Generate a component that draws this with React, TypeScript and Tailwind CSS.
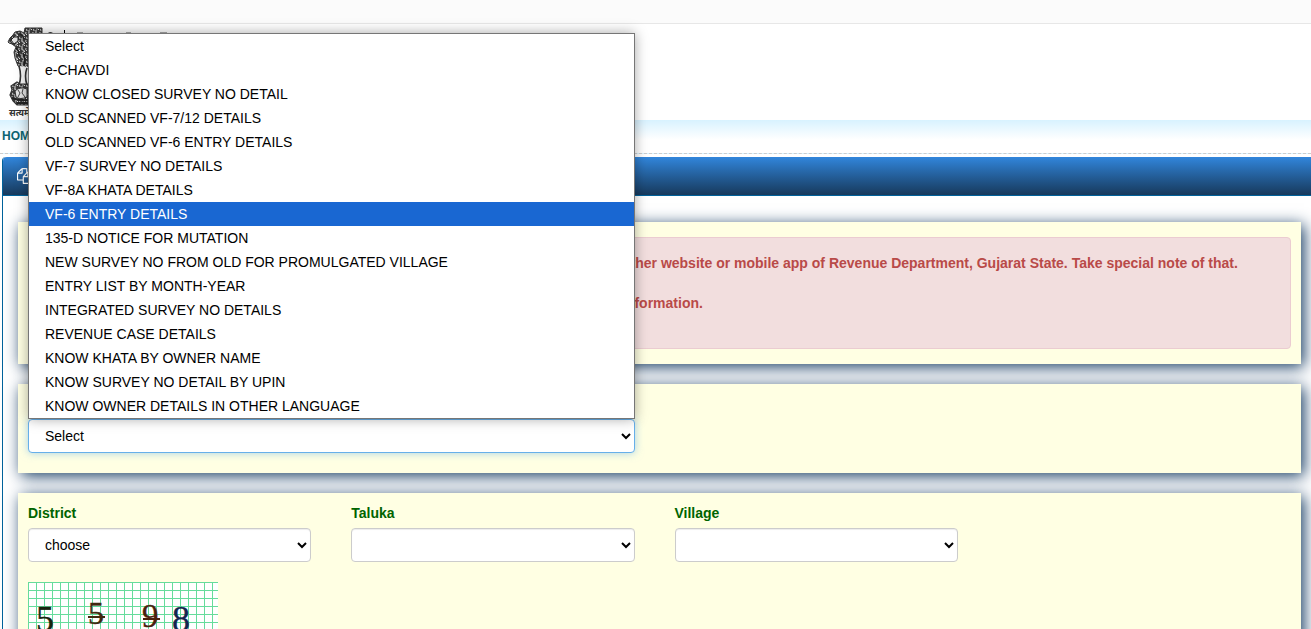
import type { ReactNode } from "react";

const services = [
  "Select",
  "e-CHAVDI",
  "KNOW CLOSED SURVEY NO DETAIL",
  "OLD SCANNED VF-7/12 DETAILS",
  "OLD SCANNED VF-6 ENTRY DETAILS",
  "VF-7 SURVEY NO DETAILS",
  "VF-8A KHATA DETAILS",
  "VF-6 ENTRY DETAILS",
  "135-D NOTICE FOR MUTATION",
  "NEW SURVEY NO FROM OLD FOR PROMULGATED VILLAGE",
  "ENTRY LIST BY MONTH-YEAR",
  "INTEGRATED SURVEY NO DETAILS",
  "REVENUE CASE DETAILS",
  "KNOW KHATA BY OWNER NAME",
  "KNOW SURVEY NO DETAIL BY UPIN",
  "KNOW OWNER DETAILS IN OTHER LANGUAGE",
];

const highlighted = "VF-6 ENTRY DETAILS";

const selectClass =
  "block h-[34px] w-full rounded border bg-white px-3 py-1 text-sm text-black outline-none";

function Emblem() {
  return (
    <svg viewBox="0 0 180 96" className="block h-24 w-[180px]" aria-hidden="true">
      <defs>
        <pattern id="curls" width="7" height="8" patternUnits="userSpaceOnUse">
          <rect width="7" height="8" fill="#3a3a3a" />
          <path
            d="M0 1q2-1 2 1t2 1M5 0q-1 2 1 3M1 5q2-1 3 1M5 5q1 0 1 2M0 7l2 0M3 3l1 1"
            fill="none"
            stroke="#e0e0e0"
            strokeWidth="1"
          />
        </pattern>
      </defs>
      {/* mane and body */}
      <path
        d="M8 18l2-4 3-3 2-3 5-1 4 2 1-5h17v9H31v32l-5 1-3-2-5-2-3-8-1-6 2-5-4-3-3-1z"
        fill="url(#curls)"
        stroke="#333"
        strokeWidth="1"
      />
      <path d="M11 16l3-3 4 0 0 4-4 3z" fill="#e2e2e2" stroke="#222" strokeWidth="1" />
      <path d="M18 10q5 0 6 5M16 24q4 4 3 9M23 29q3 7 1 13" fill="none" stroke="#222" strokeWidth="1.4" />
      {/* legs */}
      <path d="M19 42l2 9-2 10h10V43z" fill="#f7f7f7" />
      <path d="M19 42q3 10 0 19M27 44q-3 8 0 17" fill="none" stroke="#333" strokeWidth="1.6" />
      {/* abacus and bell */}
      <path
        d="M17 58l3 2h20v21H17l-4-4-3-6 2-5-1-4z"
        fill="url(#curls)"
        stroke="#333"
        strokeWidth="1.2"
      />
      <path d="M15 67q5-5 12-2v8q-7 3-11 0z" fill="#e2e2e2" stroke="#333" strokeWidth="1" />
      <path d="M18 66l2 3-2 4M23 65l-1 4 3 4" fill="none" stroke="#444" strokeWidth="1" />
      <path d="M12 74q8 3 20 2M17 79h20" fill="none" stroke="#222" strokeWidth="2" />
      <text x="9" y="92" fontSize="9" fontWeight="700" fill="#333" fontFamily="Noto Sans, sans-serif">
        सत्यमेव
      </text>
      <path d="M48 9q2-2 5 0z" fill="#333" />
      <path d="M64.500 6v8" stroke="#000" strokeWidth="1" />
      <path d="M77 9h6M126 9h5M160 9h7" stroke="#aaa" strokeWidth="2" />
    </svg>
  );
}

function FilesIcon() {
  return (
    <svg viewBox="0 0 1792 1792" className="size-4 fill-white" aria-hidden="true">
      <path d="M1696 384q40 0 68 28t28 68v1216q0 40-28 68t-68 28h-960q-40 0-68-28t-28-68v-288h-544q-40 0-68-28t-28-68v-672q0-40 20-88t48-76l408-408q28-28 76-48t88-20h416q40 0 68 28t28 68v328q68-40 128-40h416zm-544 213l-299 299h299v-299zm-640-384l-299 299h299v-299zm196 647l316-316v-416h-384v416q0 40-28 68t-68 28h-416v640h512v-256q0-40 20-88t48-76zm956 804v-1152h-384v416q0 40-28 68t-68 28h-416v640h896z" />
    </svg>
  );
}

function Captcha() {
  return (
    <svg viewBox="0 0 190 60" className="block h-[60px] w-[190px]" role="img" aria-label="Captcha">
      <defs>
        <pattern id="grid" width="8" height="8" patternUnits="userSpaceOnUse">
          <rect width="8" height="8" fill="#fff" />
          <path d="M0 .5h8M.5 0v8" stroke="#66dc9c" />
        </pattern>
      </defs>
      <rect width="190" height="60" fill="url(#grid)" />
      <g fontFamily="Liberation Serif, serif" fontSize="34" strokeWidth="0.4">
        <text x="8" y="49" fill="#17250f" stroke="#17250f" fontSize="36">5</text>
        <text x="60" y="42" fill="#40290f" stroke="#40290f" fontSize="32">5</text>
        <text x="114" y="45" fill="#4a200c" stroke="#4a200c" fontSize="33">9</text>
        <text x="144" y="49" fill="#14244f" stroke="#14244f" fontSize="36">8</text>
      </g>
      <path d="M60 35h17" stroke="#40290f" strokeWidth="2" />
      <path d="M115 37h17" stroke="#4a200c" strokeWidth="2" />
    </svg>
  );
}

function Card({ children, className = "" }: { children: ReactNode; className?: string }) {
  return (
    <section className={`bg-[#ffffe3] px-2.5 shadow-[3px_3px_15px_#163c63] ${className}`}>
      {children}
    </section>
  );
}

function Field({ id, label, options }: { id: string; label: string; options: string[] }) {
  return (
    <div>
      <label htmlFor={id} className="mb-[5px] block text-sm font-bold text-[#006400]">
        {label}
      </label>
      <select id={id} className={`${selectClass} border-[#ccc] shadow-[inset_0_1px_1px_#00000013]`}>
        {options.map((o) => (
          <option key={o}>{o}</option>
        ))}
      </select>
    </div>
  );
}

export default function App() {
  return (
    <div className="h-screen overflow-hidden bg-white font-['Liberation_Sans',sans-serif] text-sm">
      <div className="h-6 border-b border-[#e7e7e7] bg-[#fbfbfb]" />
      <header className="h-24">
        <Emblem />
      </header>

      <nav className="h-[34px] border-b border-dashed border-[#ccc] bg-linear-to-b from-[#d8f2ff] to-white to-60% px-0.5 py-[5px]">
        <a href="#home" className="text-xs font-bold text-[#0b6472]">
          HOME
        </a>
      </nav>

      <main className="mt-[3px] ml-0.5 rounded-tl border-l border-[#00629b]">
        <div className="flex h-[39px] items-center rounded-tl border-b border-[#00629b] bg-linear-to-b from-[#3186dc] to-[#173a5d] px-3.5">
          <FilesIcon />
        </div>

        <div className="flex flex-col gap-5 pt-[26px] pr-2.5 pl-[15px]">
          <Card className="py-[15px]">
            <div className="rounded border border-[#ebccd1] bg-[#f2dede] py-[15px] pl-[593px] font-bold text-[#b94a48]">
              <p className="mb-5">
                other website or mobile app of Revenue Department, Gujarat State. Take special note of
                that.
              </p>
              <p className="mb-5">information.</p>
            </div>
          </Card>

          <Card className="pt-[35px] pb-5">
            <div className="grid grid-cols-4 gap-10 pr-2.5">
              <div className="relative col-span-2">
                <select
                  aria-label="Select"
                  className={`${selectClass} border-[#66afe9] shadow-[0_0_8px_#66afe999]`}
                >
                  {services.map((s) => (
                    <option key={s}>{s}</option>
                  ))}
                </select>
                <ul
                  role="listbox"
                  className="absolute inset-x-0 bottom-full z-10 border border-[#767676] bg-white text-black shadow-[0_0_12px_#00000059]"
                >
                  {services.map((s) => (
                    <li
                      key={s}
                      role="option"
                      aria-selected={s === highlighted}
                      className={
                        s === highlighted
                          ? "bg-[#1967d2] px-4 leading-6 text-white"
                          : "px-4 leading-6"
                      }
                    >
                      {s}
                    </li>
                  ))}
                </ul>
              </div>
            </div>
          </Card>

          <Card className="pt-2.5 pb-5">
            <div className="grid grid-cols-4 gap-10 pr-2.5 pb-5">
              <Field id="district" label="District" options={["choose"]} />
              <Field id="taluka" label="Taluka" options={[]} />
              <Field id="village" label="Village" options={[]} />
            </div>
            <Captcha />
          </Card>
        </div>
      </main>
    </div>
  );
}
